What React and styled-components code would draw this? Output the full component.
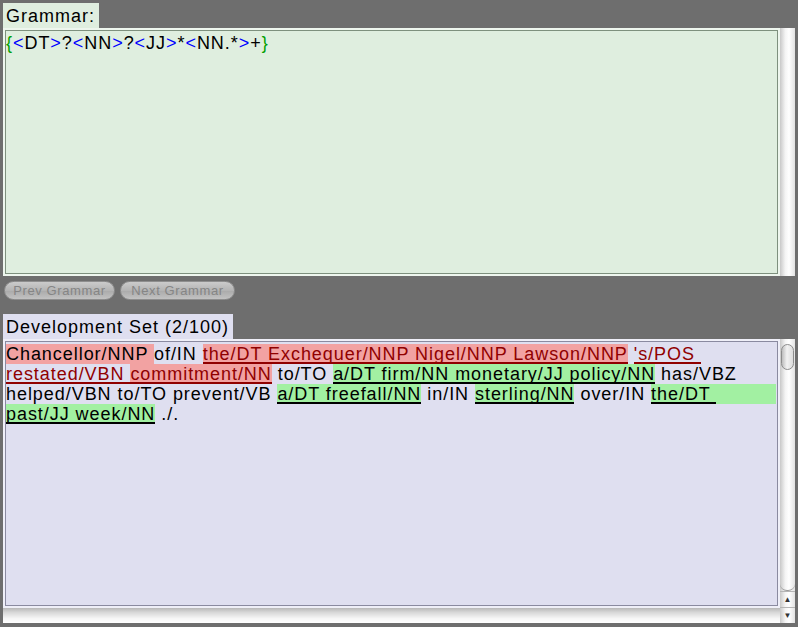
import React from "react";
import styled, { createGlobalStyle } from "styled-components";

const GlobalStyle = createGlobalStyle`
  html, body {
    margin: 0;
    padding: 0;
    background: #6e6e6e;
  }
  body {
    font-family: "Liberation Sans", Arial, sans-serif;
  }
`;

const Window = styled.div`
  width: 798px;
  height: 627px;
  box-sizing: border-box;
  padding: 3px 3px 2px 3px;
  background: #6e6e6e;
  display: flex;
  flex-direction: column;
  overflow: hidden;
`;

const Label = styled.div`
  align-self: flex-start;
  height: 25px;
  line-height: 26px;
  padding: 0 4px 0 3px;
  font-size: 18px;
  letter-spacing: 1px;
  color: #000;
  background: ${(p) => p.$bg};
  margin-top: ${(p) => p.$top || 0}px;
`;

const Row = styled.div`
  display: flex;
  height: ${(p) => p.$h}px;
`;

const Column = styled.div`
  flex: 1;
  display: flex;
  flex-direction: column;
`;

const TextBox = styled.div`
  flex: 1;
  box-sizing: border-box;
  background: ${(p) => p.$bg};
  border: 2px solid ${(p) => p.$light};
  outline: 1px solid ${(p) => p.$dark};
  outline-offset: -3px;
  padding: 3px 2px 0 1px;
  font-size: 18px;
  letter-spacing: 0.95px;
  line-height: 20px;
  color: #000;
  overflow: hidden;
`;

const VScroll = styled.div`
  width: 15px;
  display: flex;
  flex-direction: column;
  background: linear-gradient(to right, #c8c8c8, #f4f4f4 35%, #ffffff 60%, #e2e2e2);
`;

const Track = styled.div`
  flex: 1;
  padding: 5px 1px 0 1px;
  border-bottom: 1px solid #9a9a9a;
  border-radius: 0 0 7px 7px;
`;

const Thumb = styled.div`
  height: 26px;
  box-sizing: border-box;
  border: 1px solid #8c8c8c;
  border-radius: 7px;
  background: linear-gradient(to right, #bdbdbd, #f2f2f2 45%, #dcdcdc);
`;

const Arrow = styled.div`
  height: 16px;
  box-sizing: border-box;
  border-top: 1px solid #b5b5b5;
  display: flex;
  align-items: center;
  justify-content: center;
  font-size: 8px;
  color: #333;
`;

const HScroll = styled.div`
  height: 15px;
  background: linear-gradient(to bottom, #b8b8b8, #d8d8d8 30%, #f6f6f6 70%, #ffffff);
`;

const Buttons = styled.div`
  display: flex;
  gap: 5px;
  margin-top: 5px;
  margin-left: 1px;
`;

const Button = styled.button`
  width: ${(p) => p.$w}px;
  height: 19px;
  padding: 0;
  border: 1px solid #8e8e8e;
  border-radius: 10px;
  background: linear-gradient(to bottom, #cbcbcb, #b4b4b4 50%, #aaaaaa 51%, #c2c2c2);
  color: #858585;
  font-family: "Liberation Sans", Arial, sans-serif;
  font-size: 13px;
  letter-spacing: 0.6px;
`;

const Grammar = styled.div`
  white-space: pre;
`;

const Brace = styled.span`
  color: #00a000;
`;

const Angle = styled.span`
  color: #0000ff;
`;

const Line = styled.div`
  display: flex;
  white-space: pre;
  height: 20px;
`;

const TAGS = {
  plain: { bg: "transparent", color: "#000", line: "transparent" },
  missed: { bg: "#f2a2a2", color: "#000", line: "transparent" },
  wrong: { bg: "transparent", color: "#900000", line: "#900000" },
  both: { bg: "#f2a2a2", color: "#900000", line: "#900000" },
  right: { bg: "#a2f0a2", color: "#000", line: "#000" },
};

const Seg = styled.span`
  display: inline-block;
  height: 20px;
  background: ${(p) => TAGS[p.$tag].bg};
  color: ${(p) => TAGS[p.$tag].color};
  box-shadow: inset 0 -2px 0 ${(p) => TAGS[p.$tag].line};
`;

const Fill = styled.span`
  flex: 1;
  height: 20px;
  background: ${(p) => TAGS[p.$tag].bg};
`;

const lines = [
  [
    ["missed", "Chancellor/NNP "],
    ["plain", "of/IN "],
    ["both", "the/DT Exchequer/NNP Nigel/NNP Lawson/NNP"],
    ["plain", " "],
    ["wrong", "'s/POS "],
  ],
  [
    ["wrong", "restated/VBN "],
    ["both", "commitment/NN"],
    ["plain", " to/TO "],
    ["right", "a/DT firm/NN monetary/JJ policy/NN"],
    ["plain", " has/VBZ"],
  ],
  [
    ["plain", "helped/VBN to/TO prevent/VB "],
    ["right", "a/DT freefall/NN"],
    ["plain", " in/IN "],
    ["right", "sterling/NN"],
    ["plain", " over/IN "],
    ["right", "the/DT "],
    ["fill", "right"],
  ],
  [
    ["right", "past/JJ week/NN"],
    ["plain", " ./."],
  ],
];

const grammar = [
  ["b", "{"], ["a", "<"], ["t", "DT"], ["a", ">"], ["t", "?"],
  ["a", "<"], ["t", "NN"], ["a", ">"], ["t", "?"],
  ["a", "<"], ["t", "JJ"], ["a", ">"], ["t", "*"],
  ["a", "<"], ["t", "NN.*"], ["a", ">"], ["t", "+"], ["b", "}"],
];

export default function App() {
  return (
    <Window>
      <GlobalStyle />
      <Label $bg="#dfeedf">Grammar:</Label>
      <Row $h={248}>
        <TextBox $bg="#dfeedf" $light="#eef6ee" $dark="#7e907e">
          <Grammar>
            {grammar.map(([k, s], i) =>
              k === "b" ? (
                <Brace key={i}>{s}</Brace>
              ) : k === "a" ? (
                <Angle key={i}>{s}</Angle>
              ) : (
                <span key={i}>{s}</span>
              )
            )}
          </Grammar>
        </TextBox>
        <VScroll />
      </Row>
      <Buttons>
        <Button $w={111}>Prev Grammar</Button>
        <Button $w={115}>Next Grammar</Button>
      </Buttons>
      <Label $bg="#dfdff0" $top={14}>
        Development Set (2/100)
      </Label>
      <Row $h={284}>
        <Column>
          <TextBox $bg="#dfdff0" $light="#efeff8" $dark="#8a8aa0">
            {lines.map((line, i) => (
              <Line key={i}>
                {line.map(([tag, text], j) =>
                  tag === "fill" ? (
                    <Fill key={j} $tag={text} />
                  ) : (
                    <Seg key={j} $tag={tag}>
                      {text}
                    </Seg>
                  )
                )}
              </Line>
            ))}
          </TextBox>
          <HScroll />
        </Column>
        <VScroll>
          <Track>
            <Thumb />
          </Track>
          <Arrow>▲</Arrow>
          <Arrow>▼</Arrow>
        </VScroll>
      </Row>
    </Window>
  );
}
